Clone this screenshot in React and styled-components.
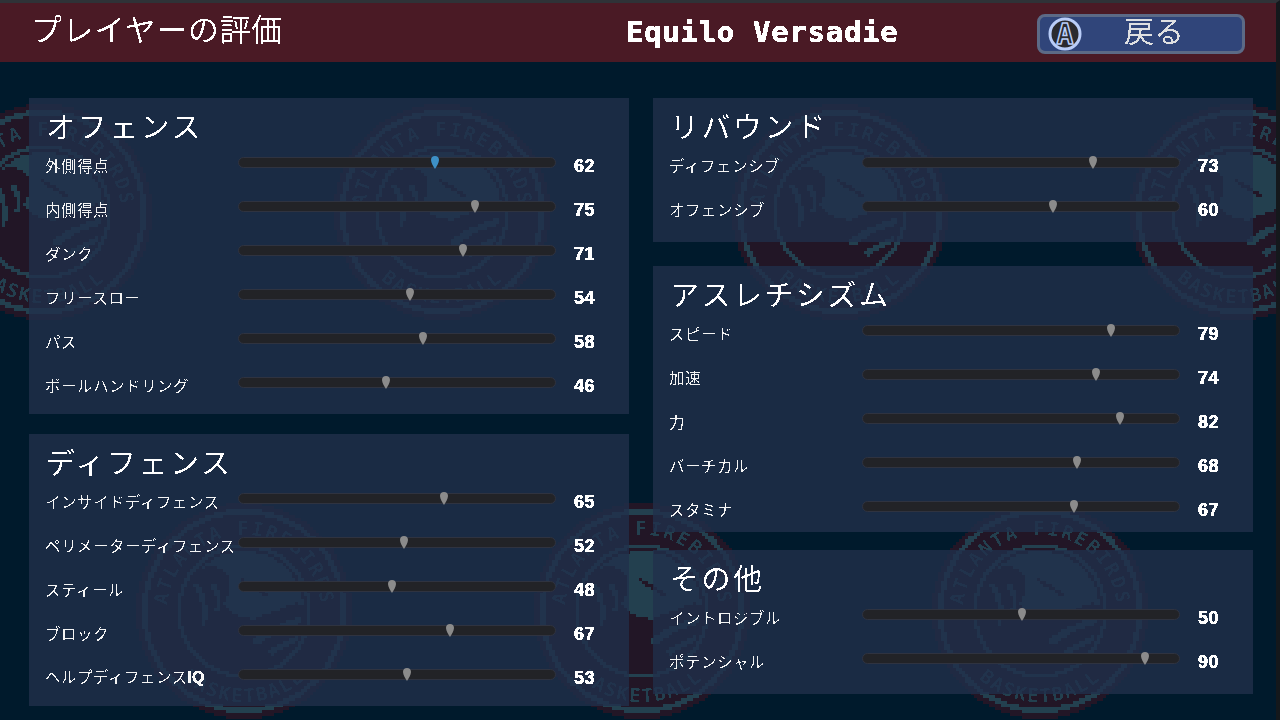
import React, { useMemo } from "react";
import styled, { createGlobalStyle } from "styled-components";

const GlobalStyle = createGlobalStyle`
  html, body {
    margin: 0;
    padding: 0;
    background: #001a2c;
  }
`;

const JP = `"Noto Sans CJK JP", "Noto Sans", sans-serif`;
const PIXEL = `"DejaVu Sans Mono", "Liberation Mono", monospace`;
const DIGITS = `"Liberation Sans", Arial, sans-serif`;

const Screen = styled.div`
  position: relative;
  width: 1280px;
  height: 720px;
  overflow: hidden;
  box-sizing: border-box;
  background: #001a2c;
  border-top: 3px solid #2f3237;
  border-right: 4px solid #14181c;
`;

const Wallpaper = styled.svg`
  position: absolute;
  top: -3px;
  left: 0;
  width: 1280px;
  height: 720px;
`;

const Defs = styled.svg`
  position: absolute;
  width: 0;
  height: 0;
`;

const Header = styled.header`
  position: relative;
  display: flex;
  align-items: center;
  height: 59px;
  background: #4a1a25;
`;

const PageTitle = styled.h1`
  width: 595px;
  margin: 0 0 0 31px;
  padding-bottom: 10px;
  font: 400 31px/49px ${JP};
  letter-spacing: 0.6px;
  color: #fff;
  filter: url(#crisp);
`;

const PlayerName = styled.div`
  width: 411px;
  font: 700 29px/59px ${PIXEL};
  letter-spacing: 0.7px;
  color: #fff;
  -webkit-text-stroke: 0.7px #fff;
  filter: url(#crisp);
`;

const BackButton = styled.button`
  display: flex;
  align-items: center;
  box-sizing: border-box;
  width: 208px;
  height: 40px;
  margin-top: 3px;
  padding: 0 0 0 8px;
  background: #30457a;
  border: 3px solid #5c6a86;
  border-radius: 8px;
`;

const BackLabel = styled.span`
  flex: 1;
  padding: 0 16px 10px 0;
  font: 400 30px/24px ${JP};
  text-align: center;
  color: #dfe0e2;
  filter: url(#crisp);
`;

const Main = styled.main`
  position: relative;
  display: flex;
  gap: 24px;
  padding: 36px 0 0 29px;
`;

const Column = styled.div`
  display: flex;
  flex-direction: column;
  width: 600px;
`;

const Panel = styled.section`
  box-sizing: border-box;
  height: ${(p) => p.$height}px;
  margin-top: ${(p) => p.$top || 0}px;
  padding-left: 16px;
  background: rgba(33, 47, 75, 0.8);
`;

const PanelTitle = styled.h2`
  height: 42px;
  margin: 0;
  padding-left: 1px;
  font: 400 29px/54px ${JP};
  letter-spacing: 2.5px;
  color: #fff;
  filter: url(#crisp);
`;

const Row = styled.div`
  display: grid;
  grid-template-columns: 193px 318px auto;
  align-items: center;
  height: 44px;
`;

const Label = styled.span`
  padding-top: 6px;
  font: 400 15.5px/20px ${JP};
  letter-spacing: 0.5px;
  white-space: nowrap;
  color: #f4f4f4;
  filter: url(#crisp);
`;

const Latin = styled.b`
  font: 700 16px/20px ${DIGITS};
  letter-spacing: 0;
  -webkit-text-stroke: 0.5px #fff;
`;

const Track = styled.div`
  position: relative;
  box-sizing: border-box;
  height: 11px;
  background: #222327;
  border: 1px solid #2f3340;
  border-radius: 6px;
`;

const Thumb = styled.svg`
  position: absolute;
  top: -2px;
  width: 8px;
  height: 13px;
  margin-left: -4px;
  fill: ${(p) => (p.$active ? "#3d90c6" : "#8b8b8b")};
`;

const Value = styled.span`
  margin-left: 18px;
  padding-top: 8px;
  font: 700 18px/20px ${DIGITS};
  letter-spacing: 0.5px;
  color: #fff;
  -webkit-text-stroke: 0.6px #fff;
  filter: url(#crisp);
`;

const sections = {
  left: [
    {
      title: "オフェンス",
      height: 316,
      rows: [
        ["外側得点", 62, true],
        ["内側得点", 75],
        ["ダンク", 71],
        ["フリースロー", 54],
        ["パス", 58],
        ["ボールハンドリング", 46],
      ],
    },
    {
      title: "ディフェンス",
      height: 272,
      top: 20,
      rows: [
        ["インサイドディフェンス", 65],
        ["ペリメーターディフェンス", 52],
        ["スティール", 48],
        ["ブロック", 67],
        ["ヘルプディフェンス", 53, false, "IQ"],
      ],
    },
  ],
  right: [
    {
      title: "リバウンド",
      height: 144,
      rows: [
        ["ディフェンシブ", 73],
        ["オフェンシブ", 60],
      ],
    },
    {
      title: "アスレチシズム",
      height: 266,
      top: 24,
      rows: [
        ["スピード", 79],
        ["加速", 74],
        ["力", 82],
        ["バーチカル", 68],
        ["スタミナ", 67],
      ],
    },
    {
      title: "その他",
      height: 144,
      top: 18,
      rows: [
        ["イントロジブル", 50],
        ["ポテンシャル", 90],
      ],
    },
  ],
};

const badges = [
  [44, 212],
  [442, 212],
  [840, 212],
  [1238, 212],
  [244, 611],
  [642, 611],
  [1040, 611],
];

const TEAL = "#23404f";
const MAROON = "#221626";

// bird shapes, all relative to the centre of the badge
const BODY =
  "M-62 -24C-50 -44 -30 -50 -18 -38C-12 -28 -14 -16 -20 -8C-18 0 -6 6 10 8L52 -8L60 -4L62 70L-70 70Z";
const BEAK = "M-4 -34L24 -18L24 -13L15 -19L-4 -30Z";
const LIGHT = [
  "M-46 -28C-37 -14 -35 2 -39 16L-44 16C-40 0 -42 -14 -51 -25Z",
  "M-30 -28C-23 -18 -21 -8 -25 0L-29 0C-26 -10 -28 -18 -34 -25Z",
  "M6 30C20 19 36 12 58 5L54 14C38 18 24 25 14 34Z",
  "M24 40C36 32 48 26 60 21L58 29C46 33 36 38 28 45Z",
];

// the badge is chunky pixel art, so it gets sampled onto a 3px grid
const buildBadge = () => {
  const ctx = document.createElement("canvas").getContext("2d");
  const body = new Path2D(BODY);
  const beak = new Path2D(BEAK);
  const light = LIGHT.map((d) => new Path2D(d));
  let dark = "";
  let teal = "";
  for (let y = -108; y < 108; y += 3) {
    for (let x = -108; x < 108; x += 3) {
      const px = x + 1.5;
      const py = y + 1.5;
      const r = Math.hypot(px, py);
      if (r > 108) continue;
      let isTeal = (r > 97 && r < 102) || (r > 63 && r < 67);
      if (r < 60) {
        const inDark = ctx.isPointInPath(body, px, py) || ctx.isPointInPath(beak, px, py);
        const inLight = light.some((p) => ctx.isPointInPath(p, px, py));
        isTeal = !inDark || inLight;
      }
      const cell = `M${x} ${y}h3v3h-3z`;
      if (isTeal) teal += cell;
      else dark += cell;
    }
  }
  return { dark, teal };
};

const Badge = ({ x, y, id, cells }) => (
  <g transform={`translate(${x} ${y})`}>
    <path d={cells.dark} fill={MAROON} shapeRendering="crispEdges" />
    <path d={cells.teal} fill={TEAL} shapeRendering="crispEdges" />
    <path id={`top${id}`} d="M-74 22A77 77 0 1 1 74 22" fill="none" />
    <path id={`bot${id}`} d="M-86 30A91 91 0 0 0 86 30" fill="none" />
    <g filter="url(#crisp)">
      <text fill={TEAL} fontFamily={PIXEL} fontWeight="700" fontSize="19" letterSpacing="2">
        <textPath href={`#top${id}`} startOffset="50%" textAnchor="middle">
          ATLANTA FIREBIRDS
        </textPath>
      </text>
      <text fill={TEAL} fontFamily={PIXEL} fontWeight="700" fontSize="19" letterSpacing="2">
        <textPath href={`#bot${id}`} startOffset="50%" textAnchor="middle">
          BASKETBALL
        </textPath>
      </text>
    </g>
  </g>
);

const Slider = ({ value, active }) => (
  <Track>
    <Thumb
      $active={active}
      viewBox="0 0 8 13"
      style={{ left: `${5.6 + value * 3.07}px` }}
    >
      <path d="M4 0C6.5 0 8 1.6 8 4C8 7 5.5 10.5 4 13C2.5 10.5 0 7 0 4C0 1.6 1.5 0 4 0Z" />
    </Thumb>
  </Track>
);

const Section = ({ title, height, top, rows }) => (
  <Panel $height={height} $top={top}>
    <PanelTitle>{title}</PanelTitle>
    {rows.map(([name, value, active, suffix]) => (
      <Row key={name}>
        <Label>
          {name}
          {suffix && <Latin>{suffix}</Latin>}
        </Label>
        <Slider value={value} active={active} />
        <Value>{value}</Value>
      </Row>
    ))}
  </Panel>
);

const App = () => {
  const cells = useMemo(buildBadge, []);
  return (
    <Screen>
      <GlobalStyle />
      <Defs aria-hidden="true">
        <filter id="crisp" x="-5%" y="-5%" width="110%" height="110%" colorInterpolationFilters="sRGB">
          <feComponentTransfer>
            <feFuncA type="discrete" tableValues="0 0 0 1 1" />
          </feComponentTransfer>
        </filter>
      </Defs>
      <Wallpaper viewBox="0 0 1280 720">
        {badges.map(([x, y], i) => (
          <Badge key={i} id={i} x={x} y={y} cells={cells} />
        ))}
      </Wallpaper>
      <Header>
        <PageTitle>プレイヤーの評価</PageTitle>
        <PlayerName>Equilo Versadie</PlayerName>
        <BackButton>
          <svg width="34" height="34" viewBox="0 0 34 34">
            <circle cx="17" cy="17" r="15" fill="#2a2a2e" stroke="#b9cdf8" strokeWidth="3" />
            <text
              x="17"
              y="27"
              textAnchor="middle"
              fontFamily={PIXEL}
              fontWeight="700"
              fontSize="28"
              fill="#2a2a2e"
              stroke="#b9cdf8"
              strokeWidth="1.5"
            >
              A
            </text>
          </svg>
          <BackLabel>戻る</BackLabel>
        </BackButton>
      </Header>
      <Main>
        <Column>
          {sections.left.map((s) => (
            <Section key={s.title} {...s} />
          ))}
        </Column>
        <Column>
          {sections.right.map((s) => (
            <Section key={s.title} {...s} />
          ))}
        </Column>
      </Main>
    </Screen>
  );
};

export default App;
